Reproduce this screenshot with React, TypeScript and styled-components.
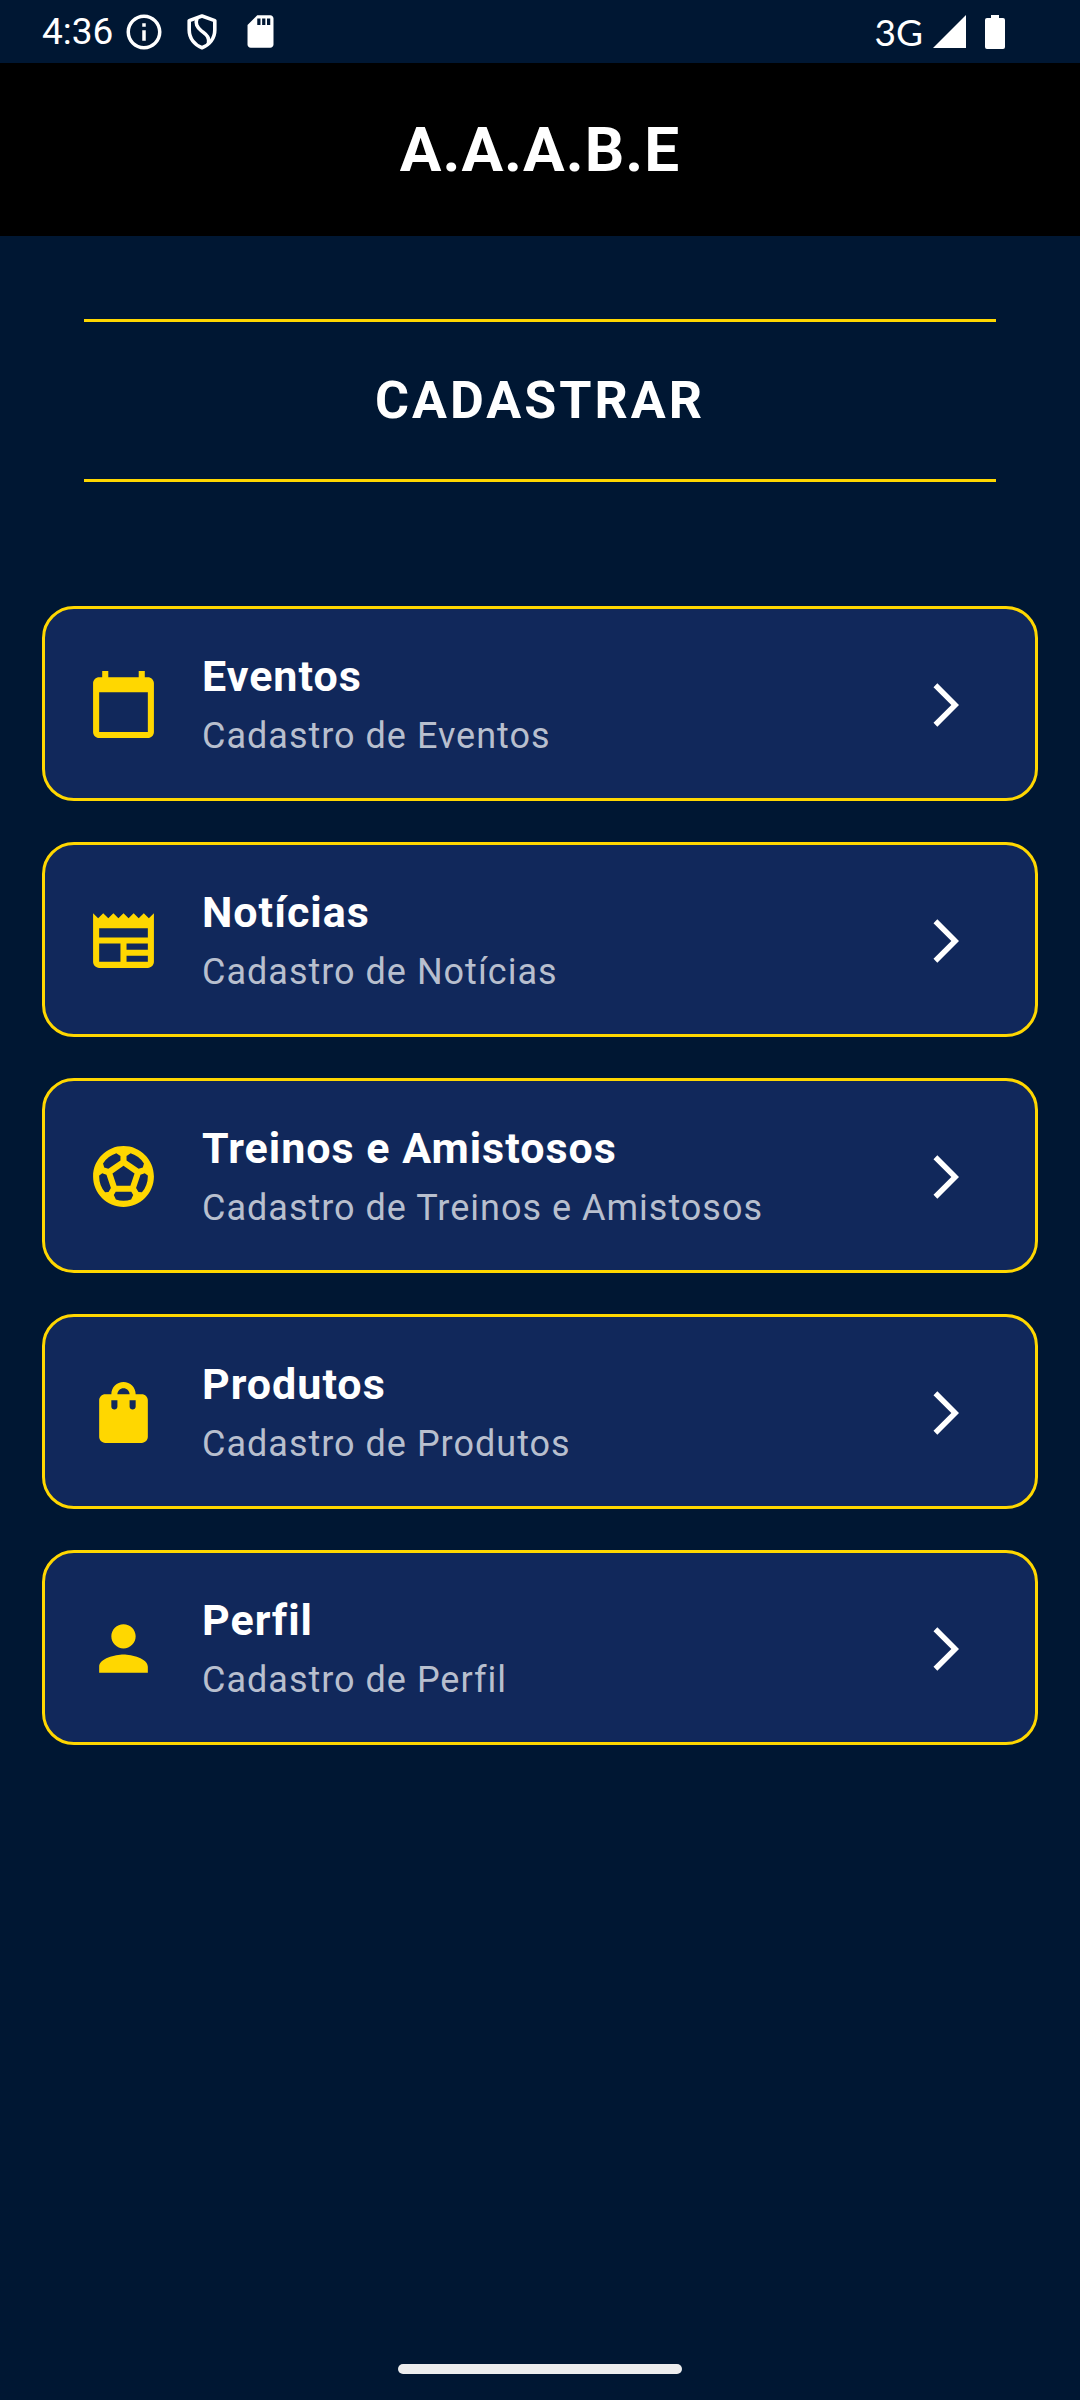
import React from 'react';
import styled, { createGlobalStyle } from 'styled-components';
import type { IconType } from 'react-icons';
import {
  MdArrowForwardIos,
  MdCalendarToday,
  MdInfoOutline,
  MdNewspaper,
  MdPerson,
  MdSdCard,
  MdShoppingBag,
  MdSportsSoccer,
} from 'react-icons/md';

const color = {
  page: '#001733',
  card: '#11285b',
  gold: '#ffd700',
  text: '#ffffff',
  muted: '#b8bfce',
  handle: '#ecedee',
};

const GlobalStyle = createGlobalStyle`
  *, *::before, *::after { box-sizing: border-box; }
  body {
    margin: 0;
    background: ${color.page};
    color: ${color.text};
    font-family: Roboto, "Noto Sans", sans-serif;
  }
`;

const Screen = styled.div`
  display: flex;
  flex-direction: column;
  min-height: 100vh;
`;

const StatusBar = styled.div`
  display: flex;
  align-items: center;
  justify-content: space-between;
  height: 63px;
  padding: 0 75px 0 42px;
`;

const StatusGroup = styled.div<{ $gap: number }>`
  display: flex;
  align-items: center;
  gap: ${(p) => p.$gap}px;
`;

const StatusSlot = styled.span`
  display: flex;
  align-items: center;
  justify-content: center;
  width: 42px;
  height: 42px;
`;

const Clock = styled.time`
  margin-right: -6px;
  font-size: 37px;
  line-height: 42px;
`;

const Network = styled.span`
  font-family: Lato, Roboto, sans-serif;
  font-size: 37px;
  line-height: 42px;
`;

const Battery = styled.svg`
  margin-left: 9px;
`;

const Header = styled.header`
  display: flex;
  align-items: center;
  justify-content: center;
  height: 173px;
  background: #000;
`;

const AppTitle = styled.h1`
  margin: 0;
  font-size: 62px;
  font-weight: 700;
  line-height: 74px;
  letter-spacing: 1px;
`;

const Main = styled.main`
  flex: 1;
  padding: 83px 42px 42px;
`;

const SectionTitle = styled.h2`
  margin: 0 42px 124px;
  padding: 47px 0;
  border: solid ${color.gold};
  border-width: 3px 0;
  font-size: 52px;
  font-weight: 700;
  line-height: 63px;
  letter-spacing: 3px;
  text-align: center;
`;

const Menu = styled.nav`
  display: flex;
  flex-direction: column;
  gap: 41px;
`;

const Card = styled.button`
  display: flex;
  align-items: center;
  gap: 42px;
  width: 100%;
  padding: 36px 63px 34px 42px;
  border: 3px solid ${color.gold};
  border-radius: 32px;
  background: ${color.card};
  color: inherit;
  font: inherit;
  text-align: left;
  cursor: pointer;
`;

const CardText = styled.span`
  flex: 1;
  display: flex;
  flex-direction: column;
  letter-spacing: 1px;
`;

const CardTitle = styled.span`
  font-size: 43px;
  font-weight: 700;
  line-height: 63px;
`;

const CardSubtitle = styled.span`
  color: ${color.muted};
  font-size: 36px;
  line-height: 56px;
`;

const GestureBar = styled.div`
  display: flex;
  justify-content: center;
  padding: 0 0 26px;
`;

const Handle = styled.span`
  width: 284px;
  height: 10px;
  border-radius: 5px;
  background: ${color.handle};
`;

const ShieldIcon = () => (
  <svg width="30" height="36" viewBox="0 0 30 36" fill="none" stroke="#fff" strokeWidth="3.6" strokeLinejoin="round" aria-hidden="true">
    <path d="M15 2 L27.8 6.6 V16 C27.8 24.5 22.4 31 15 33.8 C7.6 31 2.2 24.5 2.2 16 V6.6 Z" />
    <path d="M10 4 C8 10 10 13 14 16.5 C18 20 23 22 21.5 30" />
  </svg>
);

const SignalIcon = () => (
  <svg width="33" height="33" viewBox="0 0 33 33" aria-hidden="true">
    <path d="M33 0 V33 H0 Z" fill="#fff" />
  </svg>
);

const BatteryIcon = () => (
  <Battery width="20" height="34" viewBox="0 0 20 34" aria-hidden="true">
    <path d="M6 0 H14 V3 H18 Q20 3 20 5 V32 Q20 34 18 34 H2 Q0 34 0 32 V5 Q0 3 2 3 H6 Z" fill="#fff" />
  </Battery>
);

interface MenuEntry {
  title: string;
  icon: IconType;
}

const entries: MenuEntry[] = [
  { title: 'Eventos', icon: MdCalendarToday },
  { title: 'Notícias', icon: MdNewspaper },
  { title: 'Treinos e Amistosos', icon: MdSportsSoccer },
  { title: 'Produtos', icon: MdShoppingBag },
  { title: 'Perfil', icon: MdPerson },
];

export default function App() {
  return (
    <>
      <GlobalStyle />
      <Screen>
        <StatusBar>
          <StatusGroup $gap={16}>
            <Clock>4:36</Clock>
            <StatusSlot><MdInfoOutline size={42} /></StatusSlot>
            <StatusSlot><ShieldIcon /></StatusSlot>
            <StatusSlot><MdSdCard size={39} /></StatusSlot>
          </StatusGroup>
          <StatusGroup $gap={10}>
            <Network>3G</Network>
            <SignalIcon />
            <BatteryIcon />
          </StatusGroup>
        </StatusBar>
        <Header>
          <AppTitle>A.A.A.B.E</AppTitle>
        </Header>
        <Main>
          <SectionTitle>CADASTRAR</SectionTitle>
          <Menu>
            {entries.map(({ title, icon: Icon }) => (
              <Card key={title} type="button">
                <Icon size={73} color={color.gold} aria-hidden="true" />
                <CardText>
                  <CardTitle>{title}</CardTitle>
                  <CardSubtitle>Cadastro de {title}</CardSubtitle>
                </CardText>
                <MdArrowForwardIos size={52} aria-hidden="true" />
              </Card>
            ))}
          </Menu>
        </Main>
        <GestureBar>
          <Handle />
        </GestureBar>
      </Screen>
    </>
  );
}
